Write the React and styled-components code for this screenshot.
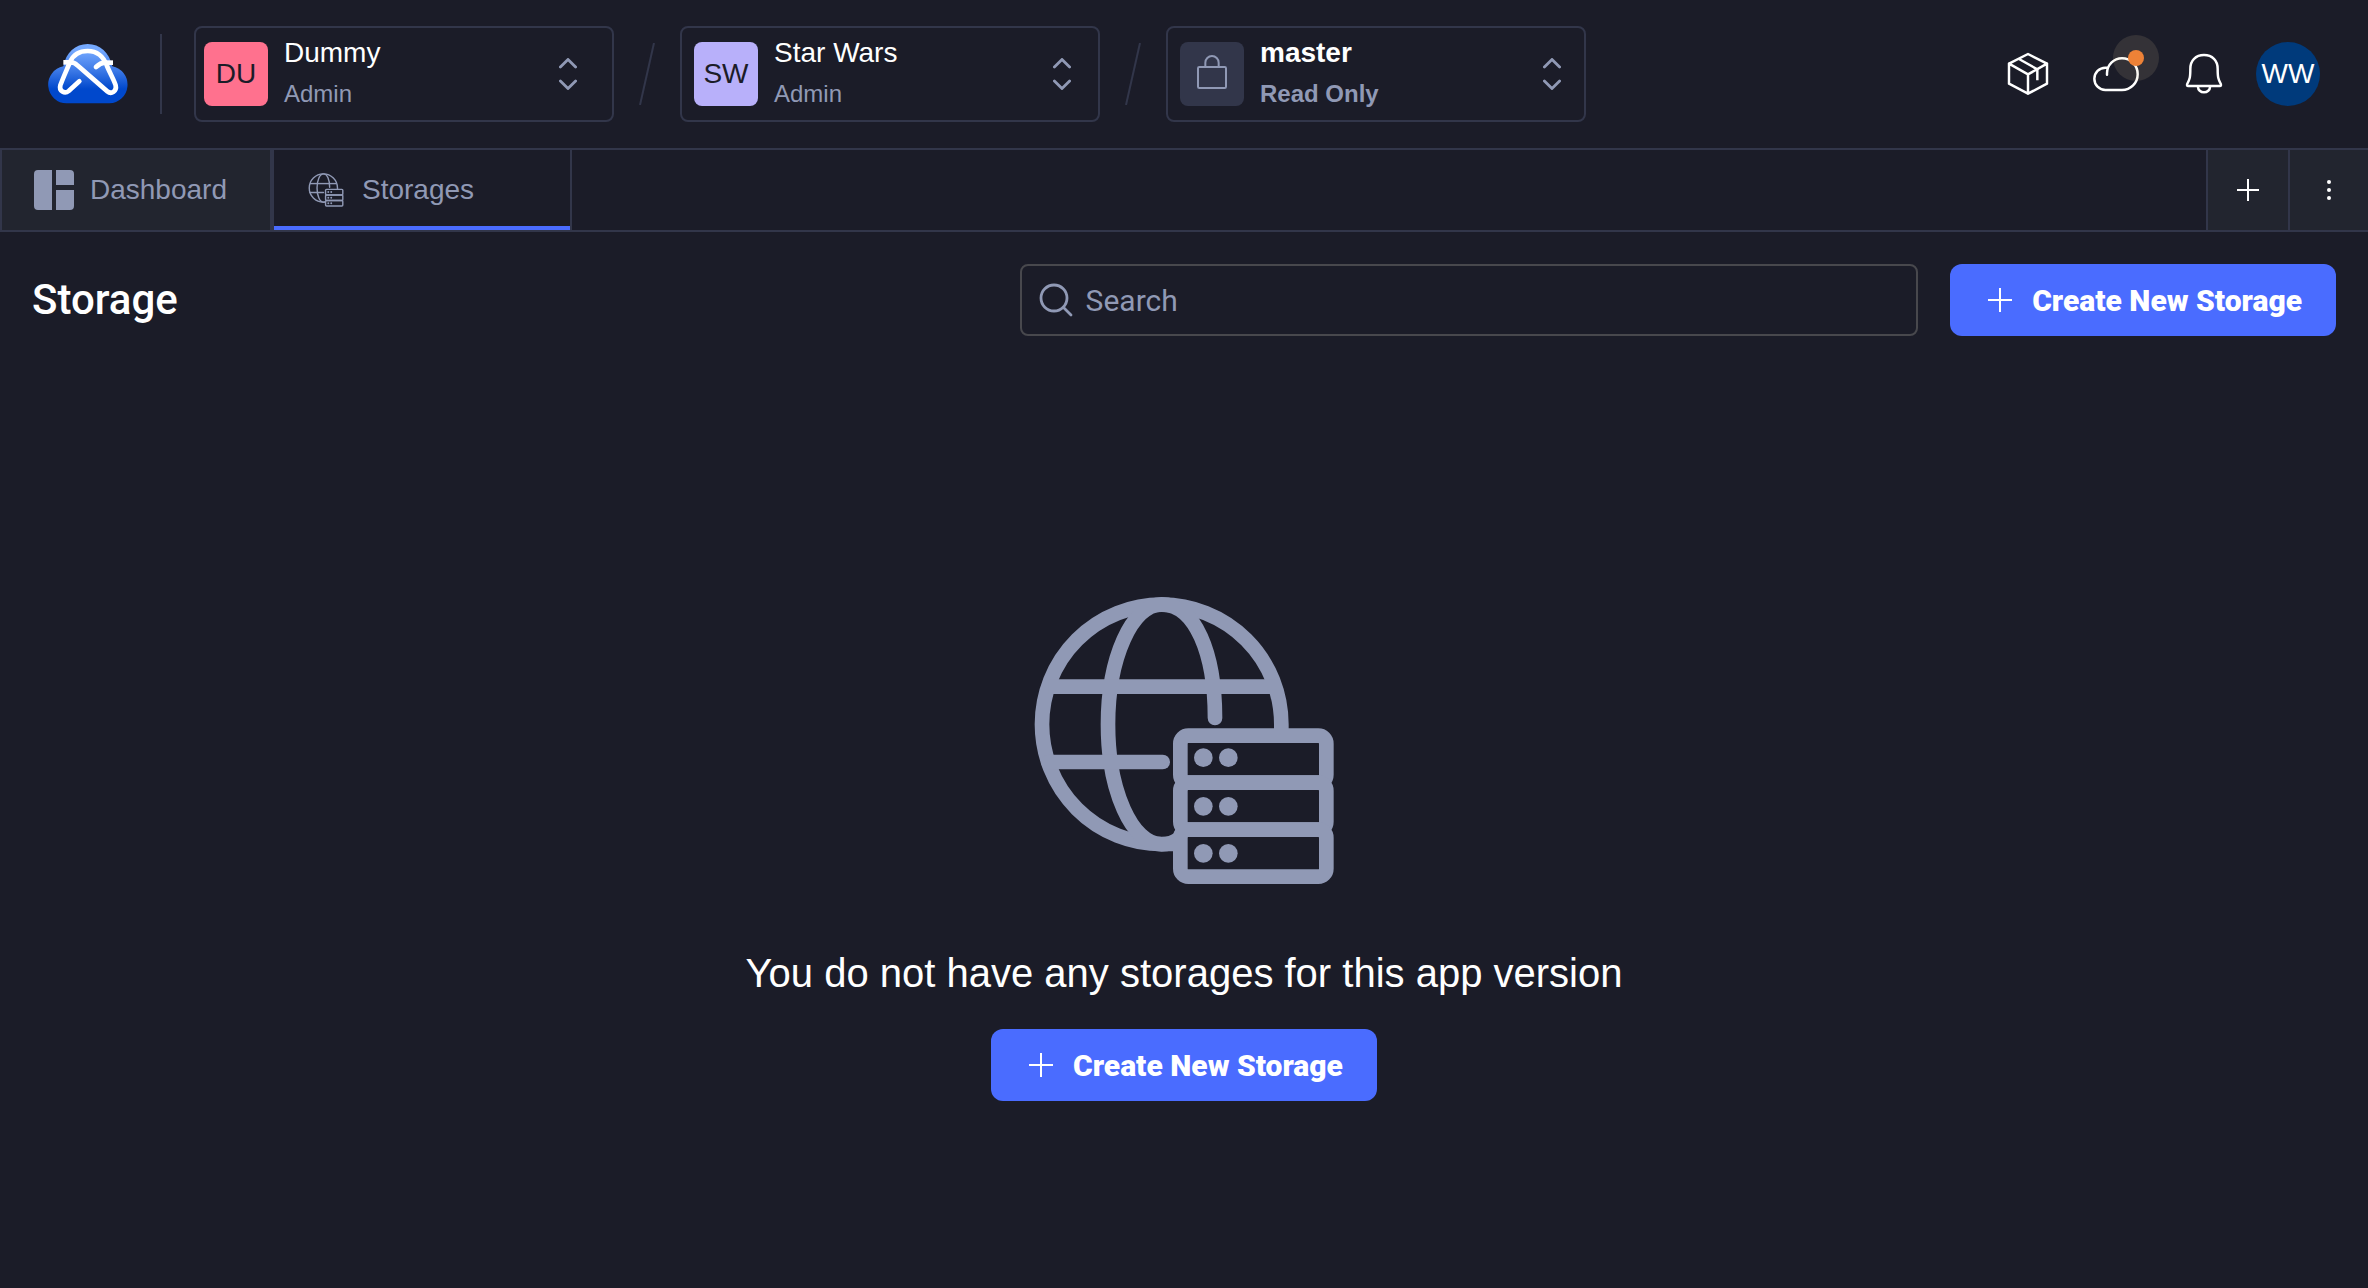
import React from "react";
import styled, { createGlobalStyle } from "styled-components";

const color = {
  page: "#1b1c28",
  raised: "#22252f",
  line: "#32364a",
  muted: "#9099b5",
  primary: "#4a6cff",
  field: "#48484d",
};

const sans = `"Liberation Sans", Arial, sans-serif`;
const display = `Roboto, "Liberation Sans", sans-serif`;

const GlobalStyle = createGlobalStyle`
  *, *::before, *::after { box-sizing: border-box; }
  body {
    margin: 0;
    background: ${color.page};
    color: #fff;
    font-family: ${sans};
    font-size: 28px;
  }
  button, input { font: inherit; color: inherit; }
  button { cursor: pointer; }
  svg { display: block; flex: none; }
`;

const Page = styled.div`
  min-height: 100vh;
  display: flex;
  flex-direction: column;
`;

const Header = styled.header`
  height: 148px;
  padding: 0 48px;
  display: flex;
  align-items: center;
  justify-content: space-between;
`;

const HeaderGroup = styled.div`
  display: flex;
  align-items: center;
  gap: ${(p) => p.$gap}px;
`;

const Divider = styled.span`
  width: 2px;
  height: 80px;
  background: ${color.line};
`;

const Selector = styled.button`
  width: 420px;
  height: 96px;
  padding: 0 ${(p) => p.$end}px 0 ${(p) => p.$start}px;
  display: flex;
  align-items: center;
  gap: 16px;
  background: transparent;
  border: 2px solid ${color.line};
  border-radius: 8px;
  text-align: left;
  font-weight: ${(p) => (p.$strong ? 700 : 400)};
`;

const Badge = styled.span`
  width: 64px;
  height: 64px;
  display: grid;
  place-items: center;
  flex: none;
  border-radius: 8px;
  background: ${(p) => p.$tone};
  color: ${color.page};
`;

const SelectorText = styled.span`
  flex: 1;
  height: 80px;
  display: flex;
  flex-direction: column;
`;

const SelectorName = styled.span`
  line-height: 38px;
`;

const SelectorRole = styled.span`
  padding-top: 4px;
  font-size: 24px;
  line-height: 36px;
  color: ${color.muted};
`;

const IconButton = styled.button`
  position: relative;
  width: 48px;
  height: 48px;
  padding: 0;
  border: 0;
  background: transparent;
`;

const Halo = styled.span`
  position: absolute;
  top: -15px;
  right: -19px;
  width: 46px;
  height: 46px;
  display: grid;
  place-items: center;
  border-radius: 50%;
  background: rgba(240, 212, 166, 0.12);
  &::after {
    content: "";
    width: 16px;
    height: 16px;
    border-radius: 50%;
    background: #ee8237;
  }
`;

const Avatar = styled.button`
  width: 64px;
  height: 64px;
  padding: 0;
  border: 0;
  border-radius: 50%;
  background: #003a7b;
`;

const TabBar = styled.nav`
  height: 84px;
  display: flex;
  border: solid ${color.line};
  border-width: 2px 0 2px 2px;
`;

const Tab = styled.a`
  width: ${(p) => p.$width}px;
  padding: 0 32px;
  display: flex;
  align-items: center;
  gap: 16px;
  color: ${color.muted};
  text-decoration: none;
  background: ${(p) => (p.$active ? color.page : color.raised)};
  border-right: ${(p) => (p.$active ? 2 : 4)}px solid ${color.line};
  box-shadow: ${(p) => (p.$active ? `inset 0 -4px ${color.primary}` : "none")};
`;

const TabSpacer = styled.span`
  flex: 1;
`;

const TabAction = styled.button`
  width: ${(p) => p.$width}px;
  padding: 0;
  display: grid;
  place-items: center;
  background: ${color.raised};
  border: 0;
  border-left: 2px solid ${color.line};
`;

const Toolbar = styled.div`
  padding: 32px 32px 0;
  display: flex;
  align-items: center;
  gap: 32px;
`;

const Title = styled.h1`
  margin: 0;
  flex: 1;
  font-family: ${display};
  font-size: 42px;
  line-height: 48px;
  font-weight: 500;
`;

const SearchBox = styled.label`
  width: 39%;
  height: 72px;
  padding: 0 16px;
  display: flex;
  align-items: center;
  gap: 12px;
  border: 2px solid ${color.field};
  border-radius: 8px;
`;

const SearchInput = styled.input`
  flex: 1;
  min-width: 0;
  padding: 0;
  border: 0;
  outline: 0;
  background: transparent;
  font-family: ${display};
  font-size: 30px;
  &::placeholder {
    color: ${color.muted};
    opacity: 1;
  }
`;

const PrimaryButton = styled.button`
  height: 72px;
  padding: 0 34px;
  display: flex;
  align-items: center;
  gap: 16px;
  border: 0;
  border-radius: 12px;
  background: ${color.primary};
  font-family: ${display};
  font-size: 30px;
  font-weight: 900;
  white-space: nowrap;
`;

const Empty = styled.main`
  flex: 1;
  padding-top: 74px;
  display: flex;
  flex-direction: column;
  align-items: center;
  justify-content: center;
`;

const EmptyText = styled.p`
  margin: 64px 0 32px;
  font-size: 40px;
  line-height: 48px;
`;

function Logo() {
  return (
    <svg width="80" height="60" viewBox="24 42 240 180" fill="none" role="img" aria-label="Home">
      <defs>
        <linearGradient id="cloud" x1="0" y1="42" x2="0" y2="222" gradientUnits="userSpaceOnUse">
          <stop offset="0.1" stopColor="#75a9ff" />
          <stop offset="0.45" stopColor="#3b78e6" />
          <stop offset="0.75" stopColor="#0048cc" />
        </linearGradient>
      </defs>
      <path
        d="M80 220A56 56 0 0 1 70 109C78 68 106 42 143 42C180 42 208 68 217 109A56 56 0 0 1 208 220Z"
        fill="url(#cloud)"
      />
      <g stroke="#fff" strokeWidth="14" strokeLinejoin="round">
        <path
          strokeLinecap="round"
          d="M118 154L86 183C74 193 56 183 61 166C68 146 80 120 90 96C100 74 120 63 143 63C170 63 190 78 201 108C212 134 222 150 227 166C231 184 214 194 202 184L112 106C106 100 100 97 94 97"
        />
        <path d="M98 97H70" />
        <path d="M219 98H192" />
        <path strokeLinecap="round" d="M196 97C184 98 176 103 168 111" />
      </g>
    </svg>
  );
}

function Slash() {
  return (
    <svg width="16" height="62" viewBox="0 0 16 62" aria-hidden="true">
      <path d="M15 0L1 62" stroke={color.line} strokeWidth="2" />
    </svg>
  );
}

function UpDown() {
  return (
    <svg width="18" height="32" viewBox="0 0 18 32" fill="none" stroke={color.muted} strokeWidth="2.8" strokeLinecap="round" strokeLinejoin="round" aria-hidden="true">
      <path d="M1.4 9L9 1.4L16.6 9M1.4 23L9 30.6L16.6 23" />
    </svg>
  );
}

function LockIcon() {
  return (
    <svg width="64" height="64" viewBox="150 126 192 192" fill="none" stroke={color.muted} strokeWidth="6" aria-hidden="true">
      <rect x="204" y="201" width="84" height="63" rx="4" />
      <path d="M226 200V188A20 20 0 0 1 266 188V200" />
    </svg>
  );
}

const lineIcon = {
  width: 48,
  height: 48,
  fill: "none",
  stroke: "#fff",
  strokeWidth: 7.4,
  strokeLinecap: "round",
  strokeLinejoin: "round",
  "aria-hidden": true,
};

function PackageIcon() {
  return (
    <svg {...lineIcon} viewBox="132 90 144 144">
      <path d="M204 102L261 131V191L204 221L147 191V131ZM147 131L204 163L261 131M204 163V221" />
      <path d="M177 117L232 148V181" strokeLinecap="butt" />
    </svg>
  );
}

function CloudIcon() {
  return (
    <svg {...lineIcon} viewBox="396 90 144 144">
      <path d="M441 164V160A45 45 0 0 1 486 115A47 47.500 0 0 1 486 210H436A33 33.500 0 0 1 436 143H442" />
    </svg>
  );
}

function BellIcon() {
  return (
    <svg {...lineIcon} viewBox="660 90 144 144">
      <path d="M732 105C707 105 691 122 691 146C691 174 689 177 682 191C680 196 681 198 685 198H779C783 198 784 196 782 191C775 177 773 174 773 146C773 122 757 105 732 105Z" />
      <path d="M714 201A18 16 0 0 0 750 201" />
    </svg>
  );
}

function DashboardIcon() {
  return (
    <svg width="40" height="40" viewBox="0 0 40 40" fill={color.muted} aria-hidden="true">
      <path d="M4 0H18V40H4A4 4 0 0 1 0 36V4A4 4 0 0 1 4 0ZM22 0H36A4 4 0 0 1 40 4V15H22ZM22 20H40V36A4 4 0 0 1 36 40H22Z" />
    </svg>
  );
}

function StorageIcon({ width, height, weight = 44, dot = 28 }) {
  return (
    <svg width={width} height={height} viewBox="102 52 900 864" fill="none" stroke={color.muted} strokeWidth={weight} aria-hidden="true">
      <path d="M844 460V434A359 359 0 1 0 485 793H535" />
      <path d="M645 415C645 220 585 74 485 74C396 74 324 235 324 434C324 633 396 794 485 794C505 794 522 788 538 776" strokeLinecap="round" />
      <path d="M145 321H825" />
      <path d="M145 547H488" strokeLinecap="round" />
      {[468, 609, 750].map((y) => (
        <rect key={y} x="541" y={y} width="438" height="141" rx="24" />
      ))}
      <g fill={color.muted} stroke="none">
        {[534, 680, 821].map((y) => (
          <React.Fragment key={y}>
            <circle cx="610" cy={y} r={dot} />
            <circle cx="685" cy={y} r={dot} />
          </React.Fragment>
        ))}
      </g>
    </svg>
  );
}

function SearchIcon() {
  return (
    <svg width="36" height="36" viewBox="0 0 36 36" fill="none" stroke={color.muted} strokeWidth="2.8" strokeLinecap="round" aria-hidden="true">
      <circle cx="16" cy="16" r="13" />
      <path d="M25.500 25.500L33 33" />
    </svg>
  );
}

function PlusIcon({ arm = 12 }) {
  return (
    <svg width="32" height="32" viewBox="-16 -16 32 32" stroke="#fff" strokeWidth="2" aria-hidden="true">
      <path d={`M0 ${-arm}V${arm}M${-arm} 0H${arm}`} />
    </svg>
  );
}

function MoreIcon() {
  return (
    <svg width="4" height="20" viewBox="0 0 4 20" fill="#fff" aria-hidden="true">
      <circle cx="2" cy="2" r="2" />
      <circle cx="2" cy="10" r="2" />
      <circle cx="2" cy="18" r="2" />
    </svg>
  );
}

function ContextSelector({ name, role, badge, tone, start, end, strong }) {
  return (
    <Selector type="button" $start={start} $end={end} $strong={strong}>
      <Badge $tone={tone}>{badge}</Badge>
      <SelectorText>
        <SelectorName>{name}</SelectorName>
        <SelectorRole>{role}</SelectorRole>
      </SelectorText>
      <UpDown />
    </Selector>
  );
}

function CreateButton() {
  return (
    <PrimaryButton type="button">
      <PlusIcon />
      Create New Storage
    </PrimaryButton>
  );
}

export default function App() {
  return (
    <Page>
      <GlobalStyle />
      <Header>
        <HeaderGroup $gap={32}>
          <Logo />
          <Divider />
          <HeaderGroup $gap={25}>
            <ContextSelector name="Dummy" role="Admin" badge="DU" tone="#ff718e" start={8} end={35} />
            <Slash />
            <ContextSelector name="Star Wars" role="Admin" badge="SW" tone="#b8b0fa" start={12} end={27} />
            <Slash />
            <ContextSelector name="master" role="Read Only" badge={<LockIcon />} tone={color.line} start={12} end={23} strong />
          </HeaderGroup>
        </HeaderGroup>
        <HeaderGroup $gap={28}>
          <HeaderGroup $gap={40}>
            <IconButton type="button" aria-label="Packages">
              <PackageIcon />
            </IconButton>
            <IconButton type="button" aria-label="Deployments">
              <CloudIcon />
              <Halo />
            </IconButton>
            <IconButton type="button" aria-label="Notifications">
              <BellIcon />
            </IconButton>
          </HeaderGroup>
          <Avatar type="button">WW</Avatar>
        </HeaderGroup>
      </Header>
      <TabBar>
        <Tab href="#dashboard" $width={272}>
          <DashboardIcon />
          Dashboard
        </Tab>
        <Tab href="#storages" $width={298} $active aria-current="page">
          <StorageIcon width={40} height={34} weight={36} dot={24} />
          Storages
        </Tab>
        <TabSpacer />
        <TabAction type="button" $width={82} aria-label="New tab">
          <PlusIcon arm={11} />
        </TabAction>
        <TabAction type="button" $width={80} aria-label="More">
          <MoreIcon />
        </TabAction>
      </TabBar>
      <Toolbar>
        <Title>Storage</Title>
        <SearchBox>
          <SearchIcon />
          <SearchInput type="text" placeholder="Search" aria-label="Search" />
        </SearchBox>
        <CreateButton />
      </Toolbar>
      <Empty>
        <StorageIcon width={300} height={288} />
        <EmptyText>You do not have any storages for this app version</EmptyText>
        <CreateButton />
      </Empty>
    </Page>
  );
}
